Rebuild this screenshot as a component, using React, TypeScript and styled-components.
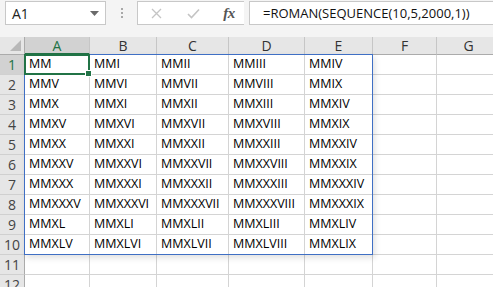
import React from "react";
import styled, { createGlobalStyle, css } from "styled-components";

const Global = createGlobalStyle`
  html, body { margin: 0; padding: 0; background: #ffffff; }
  body { width: 493px; height: 287px; overflow: hidden; font-family: "Open Sans", "Liberation Sans", sans-serif; }
`;

const Page = styled.div`
  width: 493px;
  height: 287px;
  overflow: hidden;
  display: flex;
  flex-direction: column;
  background: #ffffff;
`;

const Toolbar = styled.div`
  height: 37px;
  flex: none;
  display: flex;
  align-items: flex-start;
  box-sizing: border-box;
  padding: 1px 0 0 5px;
  background: #f4f4f4;
`;

const NameBox = styled.div`
  width: 101px;
  height: 24px;
  box-sizing: border-box;
  border: 1px solid #c8c8c8;
  background: #ffffff;
  display: flex;
  align-items: center;
  justify-content: space-between;
  padding: 0 6px 0 6px;
  font-size: 14px;
  color: #222;
`;

const Dots = styled.div`
  width: 31px;
  height: 24px;
  display: flex;
  flex-direction: column;
  align-items: center;
  justify-content: center;
  gap: 2px;
`;

const Dot = styled.span`
  width: 2px;
  height: 2px;
  background: #a8a8a8;
`;

const IconBox = styled.div`
  width: 107px;
  height: 24px;
  box-sizing: border-box;
  border: 1px solid #c8c8c8;
  border-right: none;
  background: #ffffff;
  display: grid;
  grid-template-columns: 36px 38px 34px;
  align-items: center;
  justify-items: center;
`;

const Fx = styled.span`
  font-family: "Liberation Serif", serif;
  font-style: italic;
  font-size: 15px;
  font-weight: bold;
  color: #555;
  letter-spacing: -0.5px;
`;

const FormulaBox = styled.div`
  flex: 1;
  height: 24px;
  margin-left: 5px;
  box-sizing: border-box;
  border: 1px solid #c8c8c8;
  border-right: none;
  background: #ffffff;
  display: flex;
  align-items: center;
  padding-left: 13px;
  font-size: 13px;
  color: #111;
`;

const Sheet = styled.div`
  flex: 1;
  display: grid;
  grid-template-columns: 25px 65px 67px 72px 76px 68px 64px 64px;
  grid-template-rows: 18px repeat(12, 20px);
  overflow: hidden;
  background: #ffffff;
`;

type Pos = { $r: number; $c: number };

const place = css<Pos>`
  grid-row: ${(p) => p.$r};
  grid-column: ${(p) => p.$c};
`;

const Corner = styled.div`
  grid-row: 1;
  grid-column: 1;
  background: #e6e6e6;
  border-right: 1px solid #ababab;
  border-bottom: 1px solid #ababab;
  box-sizing: border-box;
`;

const ColHead = styled.div<Pos & { $sel?: boolean }>`
  ${place};
  box-sizing: border-box;
  background: #e6e6e6;
  border-right: 1px solid #c6c6c6;
  border-bottom: 1px solid #ababab;
  display: flex;
  align-items: center;
  justify-content: center;
  font-size: 14px;
  color: #333;
  ${(p) =>
    p.$sel &&
    css`
      background: #d2d2d2;
      color: #217346;
      border-bottom: 2px solid #217346;
    `}
`;

const RowHead = styled.div<Pos & { $sel?: boolean }>`
  ${place};
  box-sizing: border-box;
  background: #e6e6e6;
  border-right: 1px solid #ababab;
  border-bottom: 1px solid #d0d0d0;
  display: flex;
  align-items: center;
  justify-content: center;
  font-size: 14px;
  color: #444;
  ${(p) =>
    p.$sel &&
    css`
      background: #d2d2d2;
      color: #217346;
    `}
`;

const Cell = styled.div<Pos>`
  ${place};
  box-sizing: border-box;
  border-right: 1px solid #d4d4d4;
  border-bottom: 1px solid #d4d4d4;
  display: flex;
  align-items: flex-end;
  padding: 0 0 2px 4px;
  font-size: 12.5px;
  line-height: 16px;
  color: #000;
  white-space: nowrap;
`;

const SpillFrame = styled.div`
  grid-column: 2 / 7;
  grid-row: 2 / 12;
  margin: -1px 0 0 -1px;
  border: 1px solid #3f6fc4;
  box-shadow: 2px 3px 6px rgba(0, 0, 0, 0.12);
  pointer-events: none;
  z-index: 2;
`;

const Selection = styled.div`
  position: relative;
  grid-column: 2 / 3;
  grid-row: 2 / 3;
  margin: -1px 0 0 -1px;
  border: 2px solid #217346;
  pointer-events: none;
  z-index: 3;
`;

const FillHandle = styled.span`
  position: absolute;
  right: -4px;
  bottom: -4px;
  width: 5px;
  height: 5px;
  background: #217346;
  border: 1px solid #ffffff;
`;

function toRoman(n: number): string {
  const map: [number, string][] = [
    [1000, "M"], [900, "CM"], [500, "D"], [400, "CD"], [100, "C"], [90, "XC"],
    [50, "L"], [40, "XL"], [10, "X"], [9, "IX"], [5, "V"], [4, "IV"], [1, "I"],
  ];
  let s = "";
  for (const [v, r] of map) {
    while (n >= v) {
      s += r;
      n -= v;
    }
  }
  return s;
}

const COLS = ["A", "B", "C", "D", "E", "F", "G"];

export default function App() {
  const rows = Array.from({ length: 12 }, (_, i) => i + 1);
  return (
    <Page>
      <Global />
      <Toolbar>
        <NameBox>
          <span>A1</span>
          <svg width="9" height="5" viewBox="0 0 9 5">
            <polygon points="0,0 9,0 4.5,5" fill="#6a6a6a" />
          </svg>
        </NameBox>
        <Dots>
          <Dot />
          <Dot />
          <Dot />
        </Dots>
        <IconBox>
          <svg width="11" height="11" viewBox="0 0 11 11">
            <path d="M1 1 L10 10 M10 1 L1 10" stroke="#c4c4c4" strokeWidth="1.3" fill="none" />
          </svg>
          <svg width="13" height="11" viewBox="0 0 13 11">
            <path d="M1 6 L4.5 9.5 L12 1.5" stroke="#c4c4c4" strokeWidth="1.6" fill="none" />
          </svg>
          <Fx>fx</Fx>
        </IconBox>
        <FormulaBox>=ROMAN(SEQUENCE(10,5,2000,1))</FormulaBox>
      </Toolbar>
      <Sheet>
        <Corner>
          <svg width="24" height="17" viewBox="0 0 24 17">
            <polygon points="21,3 21,14 10,14" fill="#b8b8b8" />
          </svg>
        </Corner>
        {COLS.map((c, i) => (
          <ColHead key={c} $r={1} $c={i + 2} $sel={i === 0}>
            {c}
          </ColHead>
        ))}
        {rows.map((r) => (
          <React.Fragment key={r}>
            <RowHead $r={r + 1} $c={1} $sel={r === 1}>
              {r}
            </RowHead>
            {Array.from({ length: 7 }, (_, c) => (
              <Cell key={c} $r={r + 1} $c={c + 2}>
                {r <= 10 && c < 5 ? toRoman(2000 + (r - 1) * 5 + c) : ""}
              </Cell>
            ))}
          </React.Fragment>
        ))}
        <SpillFrame />
        <Selection>
          <FillHandle />
        </Selection>
      </Sheet>
    </Page>
  );
}
